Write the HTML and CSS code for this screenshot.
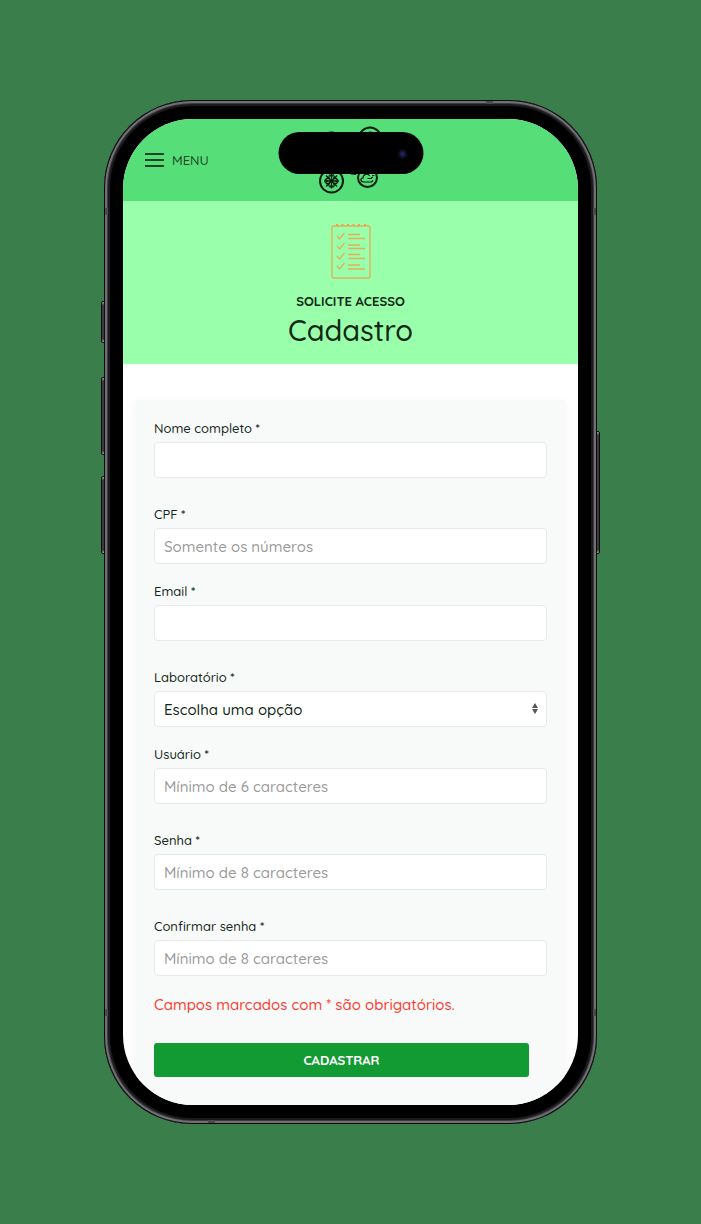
FILE: index.html
```html
<!DOCTYPE html>
<html lang="pt-BR">
<head>
<meta charset="utf-8">
<meta name="viewport" content="width=device-width, initial-scale=1">
<title>Cadastro</title>
<link rel="stylesheet" href="styles.css">
</head>
<body>
<div class="phone">
  <span class="key key-action"></span>
  <span class="key key-up"></span>
  <span class="key key-down"></span>
  <span class="key key-power"></span>
  <span class="band band-top"></span>
  <span class="band band-bottom"></span>
  <span class="band band-left-top"></span>
  <span class="band band-left-bottom"></span>
  <span class="band band-right-top"></span>
  <span class="band band-right-bottom"></span>
  <div class="screen">
    <div class="island"><span class="camera"></span></div>
    <header class="topbar">
      <button class="menu" type="button">
        <svg class="menu-icon" viewBox="0 0 19 14" aria-hidden="true"><path d="M0 1h19M0 7h19M0 13h19"/></svg>
        MENU
      </button>
      <svg class="logo" viewBox="0 0 80 82" aria-hidden="true">
        <circle cx="20.5" cy="24.500" r="11"/>
        <circle cx="59" cy="19.500" r="11"/>
        <path d="M54 16q5-5 10 0M40 54.500l5 .5"/>
        <circle cx="20.500" cy="62" r="11.500"/>
        <g stroke-width="1.300">
          <path d="M20.500 54.500v15M13 62h15M15 56.500l11 11M26 56.500l-11 11"/>
          <path d="M18.500 55.500l2 2 2-2M18.500 68.500l2-2 2 2M14 60l2 2-2 2M27 60l-2 2 2 2M15 59.500h3v-3M26 59.500h-3v-3M15 64.500h3v3M26 64.500h-3v3"/>
        </g>
        <circle cx="56.500" cy="58.500" r="9.500"/>
        <path stroke-width="1.200" d="M62 61.500l-1.500 1.500H53c-4 0-4-4-1-4 0-4 5-5 6.500-2M56.500 59.500H61M61 56.500h2.500M60 59l2-1"/>
      </svg>
    </header>
    <section class="hero">
      <svg class="hero-icon" viewBox="0 0 40 56" aria-hidden="true">
        <rect x="1" y="3" width="38" height="52" rx="2"/>
        <path class="rings" d="M6 1v2M11.500 1v2M17 1v2M22.500 1v2M28 1v2M34 1v2"/>
        <path d="M6 13l2.500 3 5-6M6 23l2.500 3 5-6M6 33l2.500 3 5-6M6 43l2.500 3 5-6"/>
        <path d="M17 11.500h12M17 15.500h17M17 22h12M17 25.500h17M17 31.500h12M17 35.500h17M17 42h12M17 46h17"/>
      </svg>
      <p class="eyebrow">SOLICITE ACESSO</p>
      <h1 class="title">Cadastro</h1>
    </section>
    <main class="content">
      <form class="card">
        <div class="field"><label for="nome">Nome completo *</label><input id="nome" type="text"></div>
        <div class="field near"><label for="cpf">CPF *</label><input id="cpf" type="text" placeholder="Somente os números"></div>
        <div class="field"><label for="email">Email *</label><input id="email" type="email"></div>
        <div class="field near">
          <label for="lab">Laboratório *</label>
          <div class="select">
            <select id="lab"><option>Escolha uma opção</option></select>
            <svg class="arrows" viewBox="0 0 6 11" aria-hidden="true"><path d="M3 0l3 5H0zM3 11l3-5H0z"/></svg>
          </div>
        </div>
        <div class="field"><label for="usuario">Usuário *</label><input id="usuario" type="text" placeholder="Mínimo de 6 caracteres"></div>
        <div class="field"><label for="senha">Senha *</label><input id="senha" type="password" placeholder="Mínimo de 8 caracteres"></div>
        <div class="field near"><label for="confirmar">Confirmar senha *</label><input id="confirmar" type="password" placeholder="Mínimo de 8 caracteres"></div>
        <p class="required">Campos marcados com * são obrigatórios.</p>
        <button class="submit" type="submit">CADASTRAR</button>
      </form>
    </main>
  </div>
</div>
</body>
</html>
```
FILE: styles.css
```css
* { box-sizing: border-box; }

body {
  margin: 0;
  padding: 100px 104px;
  background: #3a7f4b;
  color: #122716;
  font-family: Quicksand, Lato, sans-serif;
  font-weight: 500;
}

h1, p { margin: 0; }

.phone {
  position: relative;
  padding: 19px;
  border-radius: 88px;
  background: #000;
  box-shadow:
    inset 0 0 0 1px #0b0b0c,
    inset 0 0 0 3px #6f6f74,
    inset 0 0 0 4px #3c3c40,
    inset 0 0 0 6px #1b1b1e;
}

.key {
  position: absolute;
  left: -3px;
  width: 4px;
  border: 1px solid #0b0b0c;
  border-radius: 2px 0 0 2px;
  background: linear-gradient(#aaa, #3b3b3e 3px, #3b3b3e calc(100% - 3px), #aaa);
}
.key-action { top: 201px; height: 42px; }
.key-up { top: 277px; height: 78px; }
.key-down { top: 376px; height: 78px; }
.key-power { top: 331px; left: auto; right: -3px; height: 123px; border-radius: 0 2px 2px 0; }

.band { position: absolute; background: #4b4b4f; }
.band-top, .band-bottom { width: 7px; height: 3px; }
.band-top { top: 1px; right: 104px; }
.band-bottom { bottom: 1px; left: 104px; }
.band-left-top, .band-left-bottom, .band-right-top, .band-right-bottom { width: 3px; height: 7px; }
.band-left-top, .band-left-bottom { left: 1px; }
.band-right-top, .band-right-bottom { right: 1px; }
.band-left-top, .band-right-top { top: 108px; }
.band-left-bottom, .band-right-bottom { bottom: 108px; }

.screen {
  position: relative;
  overflow: hidden;
  border-radius: 70px;
  background: #fff;
}

.island {
  position: absolute;
  z-index: 1;
  top: 13px;
  left: 50%;
  width: 145px;
  height: 42px;
  border-radius: 21px;
  background: #000;
  transform: translateX(-50%);
}
.camera {
  position: absolute;
  top: 17px;
  right: 16px;
  width: 10px;
  height: 10px;
  border-radius: 50%;
  background: radial-gradient(circle, #24245c 1px, #10102e 3px, #05050c 5px);
}

.topbar {
  display: grid;
  grid-template-columns: 1fr auto 1fr;
  align-items: center;
  height: 82px;
  padding: 0 22px;
  background: #56de78;
}
.menu {
  display: flex;
  align-items: center;
  gap: 8px;
  padding: 0;
  border: 0;
  background: none;
  color: #1d4427;
  font: inherit;
  font-size: 13px;
  line-height: 20px;
}
.menu-icon { width: 19px; height: 14px; fill: none; stroke: #1d4427; stroke-width: 2; }
.logo { width: 80px; height: 82px; fill: none; stroke: #071b0c; stroke-width: 2; }

.hero {
  display: flex;
  flex-direction: column;
  align-items: center;
  padding: 22px 16px 14px;
  background: #99ffaa;
}
.hero-icon { width: 40px; height: 56px; margin-bottom: 12px; fill: none; stroke: #e2b05c; stroke-width: 1.4; }
.rings { stroke: #f3a04c; stroke-width: 2; }
.eyebrow { font-size: 13px; font-weight: 700; line-height: 20px; }
.title { font-size: 29px; font-weight: 500; line-height: 39px; }

.content { padding: 36px 13px 0; }
.card {
  padding: 18px 18px 28px;
  background: #f8faf9;
  box-shadow: 0 3px 12px rgba(0, 0, 0, 0.05);
}

.field { display: grid; gap: 4px; margin-bottom: 26px; }
.near { margin-bottom: 17px; }
label { font-size: 13px; line-height: 20px; }

input, select {
  width: 100%;
  height: 36px;
  padding: 0 9px;
  border: 1px solid #e7eae8;
  border-radius: 4px;
  background: #fff;
  color: #122716;
  font: inherit;
  font-size: 15px;
}
input::placeholder { color: #9b9b9b; opacity: 1; }
.select { position: relative; }
select { display: block; appearance: none; }
.arrows { position: absolute; top: 12px; right: 9px; width: 6px; height: 11px; fill: #555; pointer-events: none; }

.required { margin-bottom: 27px; color: #ff3b30; font-size: 15px; line-height: 23px; }
.submit {
  display: block;
  width: calc(100% - 18px);
  height: 34px;
  padding: 0;
  border: 0;
  border-radius: 3px;
  background: #129a33;
  color: #fff;
  font: inherit;
  font-size: 13px;
  font-weight: 700;
}
```
